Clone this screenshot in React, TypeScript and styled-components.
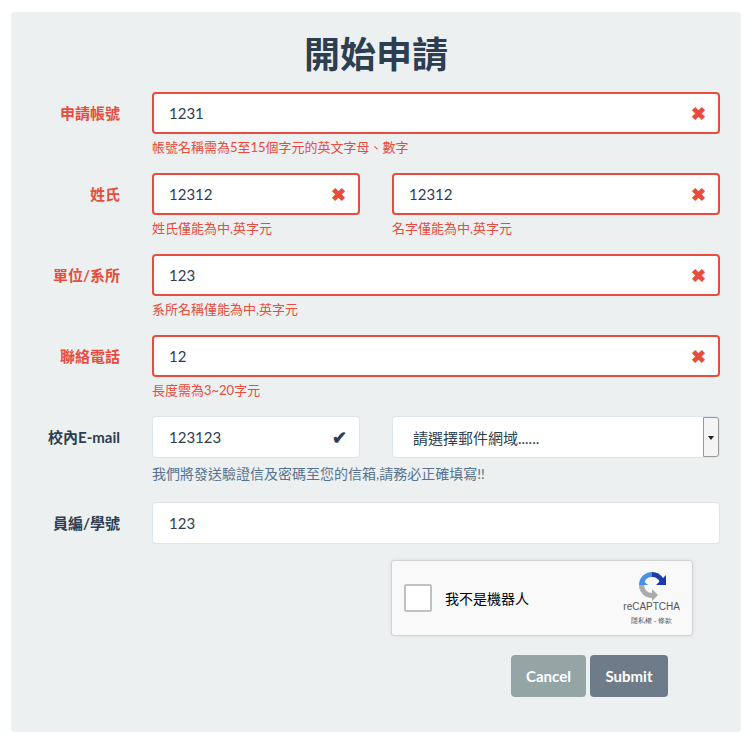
import React from "react";
import styled, { createGlobalStyle } from "styled-components";

const G = createGlobalStyle`
  body { margin: 0; background: #fff; font-family: Lato, "Noto Sans CJK TC", sans-serif; }
`;
const Panel = styled.div`
  margin: 12px 11px 0 11px; width: 730px; height: 720px; box-sizing: border-box;
  background: #ecf0f1; border-radius: 4px; padding-top: 20px;
`;
const Title = styled.h1`
  margin: 0 0 20px; text-align: center; font-size: 36px; font-weight: 700; color: #2c3e50; line-height: 40px;
  font-family: "Noto Sans CJK TC", sans-serif;
`;
const Row = styled.div<{ mb?: number }>`
  display: grid; grid-template-columns: 109px 568px; column-gap: 32px; margin-bottom: ${p => p.mb ?? 18}px;
`;
const Label = styled.div<{ err?: boolean }>`
  text-align: right; font-weight: 700; font-size: 15px; line-height: 42px;
  color: ${p => (p.err ? "#e74c3c" : "#2c3e50")}; font-family: Lato, "Noto Sans CJK TC", sans-serif;
`;
const Half = styled.div`display: grid; grid-template-columns: 208px 328px; column-gap: 32px;`;
const Field = styled.div<{ st?: "err" | "ok" | "plain" }>`
  position: relative; height: 42px; box-sizing: border-box; background: #fff; border-radius: 4px;
  border: ${p => (p.st === "err" ? "2px solid #e74c3c" : "1px solid #dce4ec")};
  display: flex; align-items: center; padding: 0 ${p => (p.st === "err" ? 15 : 16)}px;
  font-size: 15px; color: #2c3e50;
`;
const Icon = styled.span<{ c: string }>`
  position: absolute; right: 12px; top: 50%; transform: translateY(-50%); color: ${p => p.c}; font-size: 18px; font-weight: 700;
  display: flex;
`;
const Help = styled.div<{ blue?: boolean }>`
  font-size: 13px; color: ${p => (p.blue ? "#587390" : "#e74c3c")}; margin-top: 5px; line-height: 16px;
  ${p => p.blue && "font-size: 14px; margin-top: 8px;"}
`;
const Select = styled.div`
  height: 42px; box-sizing: border-box; background: #fff; border: 1px solid #dce4ec; border-radius: 4px;
  display: flex; align-items: center; font-size: 15px; color: #2c3e50; padding-left: 20px; position: relative;
`;
const Arrow = styled.div`
  position: absolute; right: 0; top: 0; bottom: 0; width: 14px; border: 1px solid #999; background: #f4f4f4;
  border-radius: 0 3px 3px 0; display: flex; align-items: center; justify-content: center;
  &::after { content: ""; border: 3px solid transparent; border-top: 4px solid #222; margin-top: 4px; }
`;
const Captcha = styled.div`
  margin-left: 380px; width: 302px; height: 76px; box-sizing: border-box; background: #f9f9f9;
  border: 1px solid #d3d3d3; border-radius: 3px; box-shadow: 0 0 4px rgba(0,0,0,0.08);
  display: flex; align-items: center; padding: 0 12px; position: relative; margin-top: 16px;
`;
const Box = styled.div`width: 24px; height: 24px; border: 2px solid #c1c1c1; border-radius: 2px; background: #fff;`;
const CapText = styled.div`font-size: 14px; margin-left: 13px; color: #000; font-family: "Noto Sans CJK TC", sans-serif;`;
const Brand = styled.div`
  position: absolute; right: 12px; top: 8px; display: flex; flex-direction: column; align-items: center;
  font-family: "Liberation Sans", sans-serif; font-size: 10px; color: #555;
`;
const Tiny = styled.div`font-size: 7px; color: #555; margin-top: 4px;`;
const Buttons = styled.div`display: flex; gap: 4px; margin: 19px 0 0 500px;`;
const Btn = styled.button<{ bg: string; w: number }>`
  height: 42px; width: ${p => p.w}px; border: none; border-radius: 4px; background: ${p => p.bg}; color: #fff;
  font-family: Lato, sans-serif; font-weight: 700; font-size: 15px;
`;

const X = () => <Icon c="#e74c3c">✖</Icon>;

export default function App() {
  return (
    <>
      <G />
      <Panel>
        <Title>開始申請</Title>
        <Row>
          <Label err>申請帳號</Label>
          <div><Field st="err">1231<X /></Field><Help>帳號名稱需為5至15個字元的英文字母、數字</Help></div>
        </Row>
        <Row>
          <Label err>姓氏</Label>
          <Half>
            <div><Field st="err">12312<X /></Field><Help>姓氏僅能為中,英字元</Help></div>
            <div><Field st="err">12312<X /></Field><Help>名字僅能為中,英字元</Help></div>
          </Half>
        </Row>
        <Row>
          <Label err>單位/系所</Label>
          <div><Field st="err">123<X /></Field><Help>系所名稱僅能為中,英字元</Help></div>
        </Row>
        <Row>
          <Label err>聯絡電話</Label>
          <div><Field st="err">12<X /></Field><Help>長度需為3~20字元</Help></div>
        </Row>
        <Row mb={20}>
          <Label>校內E-mail</Label>
          <div>
            <Half>
              <Field st="ok">123123<Icon c="#2c3e50">✔</Icon></Field>
              <Select>請選擇郵件網域......<Arrow /></Select>
            </Half>
            <Help blue>我們將發送驗證信及密碼至您的信箱,請務必正確填寫!!</Help>
          </div>
        </Row>
        <Row mb={0}>
          <Label>員編/學號</Label>
          <Field st="plain">123</Field>
        </Row>
        <Captcha>
          <Box />
          <CapText>我不是機器人</CapText>
          <Brand>
            <svg width="32" height="32" viewBox="0 0 32 32">
              <path d="M16 3a13 13 0 0 1 11 6l3-3v10h-10l3.5-3.5A8 8 0 0 0 16 8z" fill="#1c3aa9" />
              <path d="M3 16a13 13 0 0 1 13-13v5a8 8 0 0 0-7.5 5L12 16H3z" fill="#4a90e2" />
              <path d="M16 29a13 13 0 0 1-13-13h5a8 8 0 0 0 8 8v-4l6 6-6 6z" fill="#ababab" />
            </svg>
            <div>reCAPTCHA</div>
            <Tiny>隱私權 - 條款</Tiny>
          </Brand>
        </Captcha>
        <Buttons>
          <Btn bg="#95a5a6" w={75}>Cancel</Btn>
          <Btn bg="#6e7c8a" w={78}>Submit</Btn>
        </Buttons>
      </Panel>
    </>
  );
}
